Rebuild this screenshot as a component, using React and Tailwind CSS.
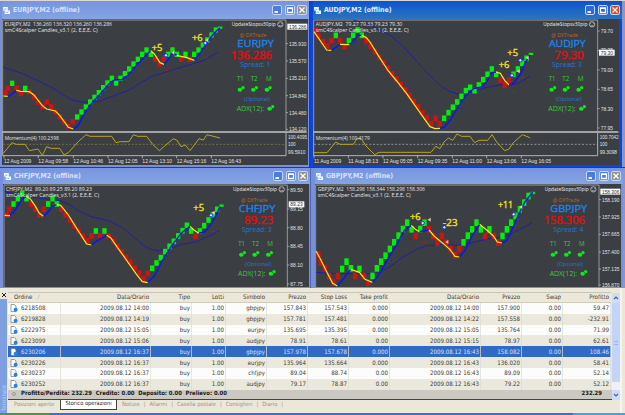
import clsx from "clsx";

// Chart coordinates are in thirds of a pixel.
const CHARTS = [
  {
    id: "eur",
    symbol: "EURJPY",
    ohlc: "136.260 136.320 136.260 136.286",
    ohlcWidth: 322,
    price: "136.286",
    spread: 1,
    view: "6 57 918 438",
    height: 146,
    left: 10,
    axis: 858,
    candleHeight: 16,
    start: 10,
    candles:
      "R278 R265 G250 R265 R280 G265 R275 R290 R306 R320 R306 R320 R336 R351 R365 R378 R365 G351 G336 G321 G306 G292 G278 G263 G249 G235 G249 G235 G221 G207 G192 G178 G163 G150 G163 R178 R192 R178 G163 G150 G163 R178 G163 R178 G163 G150 G135 G120 G105 G90 G83",
    slow: "10,202 60,218 120,245 165,268 190,285 220,301 250,307 295,304 345,286 385,271 420,250 450,231 480,222 500,215 550,200 610,182 655,156",
    falling: [
      "10,288 23,289",
      "49,271 62,274 88,275 101,284 127,317 140,327 166,333 179,346 205,382 220,387",
      "452,152 463,162 480,188 492,193",
      "530,166 560,173 583,181",
    ],
    rising: [
      "23,289 35,283 49,271",
      "220,387 234,378 260,330 280,304 300,283 330,248 345,239 365,239 385,225 410,195 452,152",
      "492,193 505,178 518,158 530,166",
      "583,181 600,160 620,129 640,102 660,83",
    ],
    momentum:
      "10,460 36,428 49,433 75,433 88,452 114,447 127,466 140,440 153,445 179,445 192,465 205,458 235,425 258,404 270,409 335,409 348,428 361,425 387,425 400,404 413,409 440,409 458,433 478,452 492,440 520,416 530,420 543,440 556,435 570,452 583,435 597,416 610,420 621,404 660,414",
    momentumValue: "100.2398",
    prices: [["135.930", 131], ["135.570", 183], ["135.210", 235], ["134.840", 287], ["134.480", 338], ["134.120", 388]],
    current: 80,
    levels: ["100.4095", "99.5910"],
    times: [["12 Aug 2009", 12], ["12 Aug 09:58", 115], ["12 Aug 10:46", 220], ["12 Aug 12:05", 324], ["12 Aug 13:10", 427], ["12 Aug 15:16", 530], ["12 Aug 16:43", 634]],
    notes: [["+5", 455, 153], ["+6", 576, 122]],
    markers: [[498, 166], [616, 129]],
    arrows: [[520, 158], [622, 121]],
    dashes: [[500, 211], [617, 172]],
  },
  {
    id: "aud",
    symbol: "AUDJPY",
    ohlc: "79.27 79.33 79.23 79.30",
    ohlcWidth: 260,
    price: "79.30",
    spread: 3,
    active: true,
    view: "9 57 918 438",
    height: 146,
    left: 13,
    axis: 863,
    candleHeight: 17,
    start: 12,
    candles:
      "R90 R108 R125 R138 R122 G106 R122 R140 G122 G106 G90 G106 R122 R138 R155 R172 R188 R205 R221 R237 R254 R270 R287 R304 R321 R338 R354 R371 R355 R371 G355 G338 G322 G306 G289 G272 G262 G272 G255 G239 G223 G207 G223 R240 R255 R240 G223 G207 G190 G175 G162",
    slow: "130,60 180,74 210,89 245,109 280,140 320,184 360,227 395,260 425,277 450,283 490,275 530,262 570,255 610,254 632,246 660,228",
    falling: ["12,95 50,150 64,151", "90,133 118,134", "155,106 168,112 180,126 205,167 235,213 260,243 290,281 330,338 360,380 375,386 390,385", "558,216 571,220 584,241 597,255"],
    rising: ["64,151 77,142 90,133", "118,134 130,123 143,106 155,106", "390,385 402,382 420,362 440,328 465,290 490,266 517,260 532,242 545,219 558,216", "597,255 610,250 630,225 648,184 660,165"],
    momentum:
      "12,458 51,458 77,426 90,433 130,433 142,414 155,418 168,438 194,464 207,457 363,457 377,439 390,446 402,426 415,414 428,421 441,402 455,409 480,409 494,428 507,421 533,421 546,404 560,426 584,452 597,447 610,428 637,404 660,413",
    momentumValue: "100.4179",
    prices: [["79.70", 93], ["79.35", 151], ["79.00", 210], ["78.65", 268], ["78.30", 326], ["77.95", 384]],
    current: 158,
    levels: ["100.7042", "99.3098"],
    times: [["11 Aug 2009", 12], ["11 Aug 18:13", 115], ["12 Aug 05:05", 219], ["12 Aug 09:35", 323], ["12 Aug 11:00", 427], ["12 Aug 13:06", 530], ["12 Aug 16:05", 634]],
    notes: [["+6", 566, 204], ["+5", 592, 168]],
    markers: [[606, 226], [631, 181]],
    arrows: [[626, 214], [653, 173]],
    dashes: [[637, 233], [608, 274]],
  },
  {
    id: "chf",
    symbol: "CHFJPY",
    ohlc: "89.20 89.25 89.20 89.23",
    ohlcWidth: 258,
    price: "89.23",
    spread: 3,
    view: "9 57 918 309",
    height: 103,
    left: 14,
    axis: 862,
    candleHeight: 17,
    start: 14,
    candles:
      "R150 R133 G117 G101 G85 G101 R117 R133 R150 R133 G117 G101 G117 R133 R150 R165 R182 R198 R213 R228 R213 G198 R213 G198 R213 R228 R245 R260 R277 R292 R309 R325 R341 R325 G310 G294 G278 G260 G244 G229 G213 G197 G181 G198 R214 G198 G182 G165 G149 G133 G122",
    slow: "14,80 70,92 130,101 180,107 210,120 235,137 270,154 325,167 365,186 400,215 430,241 450,252 475,257 510,251 545,238 590,230 625,214 660,196",
    falling: ["14,151 30,152", "79,94 92,103 105,122 118,145 130,154", "170,119 182,121 205,150 230,190 260,237 274,240", "320,211 332,218 350,244 380,286 410,329 427,350 443,353", "570,184 582,195 596,205"],
    rising: ["30,152 45,136 66,102 79,94", "130,154 145,140 157,124 170,119", "274,240 290,228 320,211", "443,353 465,330 485,290 515,242 545,203 570,184", "596,205 613,201 630,182 648,151 660,125"],
    prices: [["89.50", 74], ["89.15", 132], ["88.80", 188], ["88.45", 244], ["88.10", 300], ["87.75", 357]],
    current: 118,
    notes: [["+5", 580, 139]],
    markers: [[633, 151]],
    arrows: [[641, 143]],
    dashes: [[637, 199]],
  },
  {
    id: "gbp",
    symbol: "GBPJPY",
    ohlc: "158.298 158.344 158.298 158.306",
    ohlcWidth: 322,
    price: "158.306",
    spread: 4,
    view: "15 57 918 309",
    height: 103,
    left: 19,
    axis: 867,
    candleHeight: 20,
    start: 18,
    candles:
      "R270 R293 R309 R333 R353 R333 G312 G290 G310 R333 G312 R333 R353 G333 G310 G290 G272 G252 G232 G212 G192 G173 G193 R213 G192 G173 R193 R213 R233 R213 R233 R252 R270 R252 G232 G212 G193 G173 G193 R213 G193 R213 R233 G213 G193 G173 G153 G133 G113 G93 G84",
    slow: "18,322 90,326 200,325 240,305 280,275 320,253 350,242 400,238 440,241 475,236 510,227 545,220 590,214 625,196 666,173",
    falling: ["18,258 30,280 50,320 68,355 82,363", "122,313 148,322 165,343 187,352", "304,181 315,192 328,200", "357,195 372,213 400,236 420,254 435,274 448,276", "509,178 530,195 550,213 562,231 576,234"],
    rising: ["82,363 100,342 122,313", "187,352 205,333 235,280 262,235 283,196 304,181", "328,200 342,197 357,195", "448,276 465,257 485,215 509,178", "576,234 590,227 608,190 625,150 645,110 668,82"],
    prices: [["158.190", 104], ["157.925", 156], ["157.665", 208], ["157.400", 261], ["157.135", 312], ["156.870", 360]],
    current: 80,
    notes: [["+6", 300, 166], ["-23", 398, 184], ["+11", 564, 130]],
    markers: [[338, 174], [403, 187], [611, 148]],
    arrows: [[359, 164], [412, 231], [634, 126]],
    dashes: [[343, 233], [616, 205]],
  },
];

const COLUMNS = ["Ordine", "Data/Orario", "Tipo", "Lotti", "Simbolo", "Prezzo", "Stop Loss", "Take profit", "Data/Orario", "Prezzo", "Swap", "Profitto"];

const ORDERS = [
  ["6218508", "2009.08.12 14:00", "buy", "1.00", "gbpjpy", "157.843", "157.543", "0.000", "2009.08.12 14:00", "157.900", "0.00", "59.47"],
  ["6219828", "2009.08.12 14:19", "buy", "1.00", "gbpjpy", "157.781", "157.481", "0.000", "2009.08.12 14:22", "157.558", "0.00", "-232.91"],
  ["6222975", "2009.08.12 15:05", "buy", "1.00", "eurjpy", "135.695", "135.395", "0.000", "2009.08.12 15:05", "135.764", "0.00", "71.99"],
  ["6223099", "2009.08.12 15:06", "buy", "1.00", "audjpy", "78.91", "78.61", "0.00", "2009.08.12 15:15", "78.97", "0.00", "62.61"],
  ["6230206", "2009.08.12 16:37", "buy", "1.00", "gbpjpy", "157.978", "157.678", "0.000", "2009.08.12 16:43", "158.082", "0.00", "108.46"],
  ["6230226", "2009.08.12 16:37", "buy", "1.00", "eurjpy", "135.964", "135.664", "0.000", "2009.08.12 16:43", "136.020", "0.00", "58.41"],
  ["6230237", "2009.08.12 16:37", "buy", "1.00", "chfjpy", "89.04", "88.74", "0.00", "2009.08.12 16:43", "89.09", "0.00", "52.14"],
  ["6230252", "2009.08.12 16:37", "buy", "1.00", "audjpy", "79.17", "78.87", "0.00", "2009.08.12 16:43", "79.22", "0.00", "52.12"],
];

const SELECTED = "6230206";
const TABS = ["Notizie", "Allarmi", "Casella postale", "Consiglieri", "Diario"];
const GRID = "grid grid-cols-[53px_90px_41px_34px_41px_41px_41px_41px_91px_41px_41px_48px]";
const NARROW = "'Liberation Sans Narrow', 'Liberation Sans', sans-serif";

function Label({ x, y, w, children, ...rest }) {
  return (
    <text x={x} y={y} textLength={w} lengthAdjust="spacingAndGlyphs" {...rest}>
      {children}
    </text>
  );
}

function Signal({ x, y }) {
  return (
    <g fill="#08ee16">
      <ellipse cx={x - 3} cy={y + 2} rx="7" ry="6" />
      <circle cx={x + 6} cy={y - 4} r="5" />
      <path d={`M${x} ${y - 4}l4 5`} stroke="#266b2c" strokeWidth="2" />
    </g>
  );
}

function InfoPanel({ chart }) {
  const { axis, symbol, price, spread } = chart;
  const cx = axis - 92;
  const priceWidth = price.length > 5 ? 124 : 88;
  return (
    <g fontFamily="'Open Sans', sans-serif">
      <Label x={axis - 163} y={79} w={132} fontSize="16" fill="#f0f0f0">UpdateStopsv30pip</Label>
      <circle cx={axis - 17} cy={73} r="8" fill="none" stroke="#e4e4e4" strokeWidth="2" />
      <path d={`M${axis - 21} 70v2M${axis - 13} 70v2M${axis - 21} 76q4 3 8 0`} stroke="#e4e4e4" strokeWidth="1.6" fill="none" />
      <Label x={cx - 47} y={110} w={80} fontSize="15" fill="#b8692c">@ DXTrade</Label>
      <Label x={cx - 54} y={141} w={110} fontSize="28" fill="#1d86ee" stroke="#1d86ee" strokeWidth="0.8">{symbol}</Label>
      <Label x={cx + 50 - priceWidth} y={177} w={priceWidth} fontSize="33" fill="#d81414" stroke="#d81414" strokeWidth="1.5">{price}</Label>
      <Label x={cx - 45} y={202} w={90} fontSize="20" fill="#2478cc">Spread: {spread}</Label>
      <g fontSize="21" fill="#3cc83c">
        <Label x={cx - 55} y={243} w={20}>T1</Label>
        <Label x={cx - 14} y={243} w={21}>T2</Label>
        <Label x={cx + 32} y={243} w={17}>M</Label>
        <Label x={cx - 56} y={332} w={82}>ADX(12):</Label>
      </g>
      <Label x={cx - 34} y={303} w={78} fontSize="16" fill="#2478cc">(Optional)</Label>
      <Signal x={cx - 43} y={267} />
      <Signal x={cx - 3} y={267} />
      <Signal x={cx + 38} y={267} />
      <Signal x={cx + 46} y={324} />
    </g>
  );
}

function Chart({ chart }) {
  const { left, axis, candleHeight, start } = chart;
  const bottom = chart.momentum ? 394 : 366;
  return (
    <svg className="block w-[306px] shrink-0" height={chart.height} viewBox={chart.view} fontFamily={NARROW}>
      <rect x="0" y="57" width="940" height="438" fill="#3b3e43" />
      <path d={`M${left - 2} ${bottom}V60H${axis}V${bottom}`} fill="none" stroke="#a9a9a5" strokeWidth="2.5" />

      <polyline points={chart.slow} fill="none" stroke="#1d1da8" strokeWidth="2.6" />
      {chart.candles.split(" ").map((c, i) => {
        const h = i === 50 ? 7 : candleHeight;
        return (
          <rect
            key={i}
            x={Math.max(start + i * 13 - 6, left)}
            y={Number(c.slice(1)) - h / 2}
            width="13"
            height={h}
            fill={c[0] === "G" ? "#04ee0c" : "#cf1212"}
          />
        );
      })}
      {chart.rising.map((p) => (
        <polyline key={p} points={p} fill="none" stroke="#0a18f0" strokeWidth="4.5" />
      ))}
      {chart.falling.map((p) => (
        <polyline key={p} points={p} fill="none" stroke="#f8e820" strokeWidth="3.6" />
      ))}
      {chart.dashes.map(([x, y]) => (
        <path key={x} d={`M${x - 6} ${y}h12`} stroke="#c01818" strokeWidth="2.5" />
      ))}
      {chart.markers.map(([x, y]) => (
        <circle key={x} cx={x} cy={y} r="5" fill="#dfe6ff" stroke="#1634e8" strokeWidth="3" />
      ))}
      {chart.arrows.map(([x, y]) => (
        <path key={x} d={`M${x - 6} ${y}l9 -6v12z`} fill="#f2c6a0" />
      ))}
      {chart.notes.map(([t, x, y]) => (
        <Label key={t} x={x} y={y} w={t.length > 2 ? 45 : 32} fontSize="27" fontFamily="'Open Sans', sans-serif" fill="#f7e01c" stroke="#f7e01c">
          {t}
        </Label>
      ))}

      <g fill="#e6e6e6" fontSize="16" fontFamily="'Open Sans', sans-serif">
        <Label x={left + 4} y={78} w={chart.ohlcWidth}>{chart.symbol},M2&nbsp; {chart.ohlc}</Label>
        <Label x={left + 4} y={95} w={279}>smC4Scalper Candles_v3.1 (2, E,E,E, C)</Label>
      </g>
      <InfoPanel chart={chart} />

      <g fill="#e2e2e2" fontSize="17">
        {chart.prices.map(([t, y]) => (
          <g key={t}>
            <path d={`M${axis} ${y}h6`} stroke="#c9c9c9" strokeWidth="2" />
            <Label x={axis + 9} y={y + 6} w={t.length > 5 ? 52 : 37}>{t}</Label>
          </g>
        ))}
      </g>
      <rect x={axis + 4} y={chart.current - 9} width={chart.price.length > 5 ? 60 : 47} height="18" fill="#fafafa" />
      <Label x={axis + 9} y={chart.current + 6} w={chart.price.length > 5 ? 52 : 37} fontSize="17" fill="#333">{chart.price}</Label>

      {chart.momentum && (
        <g>
          <path d={`M6 396H${axis + 62}`} stroke="#c6c6c2" strokeWidth="4" />
          <path d={`M${left - 2} 398V467H${axis}V398`} fill="none" stroke="#d2c8c8" strokeWidth="2.5" />
          <path d={`M${left} 433H${axis}`} stroke={chart.active ? "#b9b9b0" : "#8c8648"} strokeWidth="2" strokeDasharray="6 5" />
          <polyline points={chart.momentum} fill="none" stroke="#b9a41e" strokeWidth="3" />
          <g fill="#e2e2e2" fontSize="16.5">
            <Label x={left + 4} y={420} w={162} fontFamily="'Open Sans', sans-serif">Momentum(4) {chart.momentumValue}</Label>
            <Label x={axis + 6} y={416} w={57}>{chart.levels[0]}</Label>
            <Label x={axis + 6} y={439} w={23}>100</Label>
            <Label x={axis + 6} y={463} w={52}>{chart.levels[1]}</Label>
            {chart.times.map(([t, x], i) => (
              <g key={t}>
                <path d={`M${x} 467v8`} stroke="#d8d8d8" strokeWidth="2" />
                <Label x={x} y={488} w={i === 0 ? 82 : 89}>{t}</Label>
              </g>
            ))}
          </g>
        </g>
      )}
    </svg>
  );
}

function WindowButton({ kind, active }) {
  const close = kind === "close";
  return (
    <span
      className={clsx(
        "flex size-[10px] items-center justify-center rounded-[2px] border border-[#c8d6f4]",
        close ? (active ? "bg-[#dc4a24]" : "bg-[#93938c]") : active ? "bg-[#2f68dc]" : "bg-[#4a7de0]"
      )}
    >
      <svg viewBox="0 0 8 8" className="size-2 shrink-0" fill="none" stroke="#fff" strokeWidth="1.3">
        {kind === "min" && <path d="M1.5 6H5" strokeWidth="1.8" />}
        {kind === "max" && <path d="M1.5 2h5v4.5h-5zM1.5 2.3h5" />}
        {close && <path d="M1.5 1.5l5 5M6.5 1.5l-5 5" />}
      </svg>
    </span>
  );
}

function ChartWindow({ chart, className, titleClass }) {
  return (
    <section className={clsx("flex flex-col overflow-hidden", chart.active ? "bg-[#0c45dc]" : "bg-[#7890dc]", className)}>
      <header
        className={clsx(
          "flex shrink-0 items-center pr-[2px] pl-[1px]",
          chart.active ? "bg-linear-to-b from-[#0e50d2] via-[#1c66c6] to-[#2c72bc]" : "bg-linear-to-b from-[#7894e0] to-[#84a4e2]",
          titleClass
        )}
      >
        <svg viewBox="0 0 8 8" className="size-[7px] shrink-0">
          <path d="M0 0h5.500v4H0zM2 4h6v4H2z" fill="#f4f8ff" />
          <path d="M1 3l1-1 1 1 1-1M3 6.500l1-1 1 1 1-1" stroke="#3c84c8" strokeWidth=".7" fill="none" />
        </svg>
        <h2 className={clsx("ml-[3px] text-[6.9px] leading-none font-bold whitespace-nowrap", chart.active ? "text-[#e4edfa]" : "text-[#d8e2f6]")}>
          {chart.symbol},M2 (offline)
        </h2>
        <div className="ml-auto flex gap-[2.5px]">
          <WindowButton kind="min" active={chart.active} />
          <WindowButton kind="max" active={chart.active} />
          <WindowButton kind="close" active={chart.active} />
        </div>
      </header>
      <Chart chart={chart} />
    </section>
  );
}

function OrderIcon() {
  return (
    <svg viewBox="0 0 8 8" className="mr-[3px] size-[8px] shrink-0">
      <path d="M1 .5h3.500L6 2v5.500H1z" fill="#fff" stroke="#777" strokeWidth=".7" />
      <circle cx="5.600" cy="5.700" r="2" fill="#2184e0" />
    </svg>
  );
}

function Terminal() {
  return (
    <section className="flex h-[125px] shrink-0 bg-[#ebe8da] text-[6.1px] leading-none text-[#3c3c38]">
      <aside className="flex w-[7px] shrink-0 flex-col bg-[#7e9fe0]">
        <div className="flex h-[11px] items-end justify-center bg-[#ebe8da] pb-[2px]">
          <svg viewBox="0 0 4 4" className="size-[4px]"><path d="M0 0l4 4M4 0l-4 4" stroke="#222" /></svg>
        </div>
        <span className="mt-auto mb-[2px] rotate-180 self-center text-[6px] leading-[7px] text-[#bccdf0] [writing-mode:vertical-rl]">Terminale</span>
      </aside>
      <div className="flex w-[605px] shrink-0 flex-col pt-[4px]">
        <div className="ml-px w-[603px] border-t border-[#c9c6b8]">
          <div className={clsx(GRID, "h-[10px] border-b border-[#cfccbd]")}>
            {COLUMNS.map((c, i) => (
              <div key={i} className={clsx("flex items-center whitespace-nowrap", i === 0 ? "pl-[6px]" : "justify-end pr-[2px]")}>
                {c}
                {i === 0 && <span className="ml-[6px] text-[#aaa79a]">⁄</span>}
              </div>
            ))}
          </div>
          {ORDERS.map((row, r) => (
            <div
              key={row[0]}
              className={clsx(GRID, "h-[10.83px]", row[0] === SELECTED ? "bg-[#316ac5] text-[#d4e2f8]" : r % 2 ? "bg-[#ebe9dd]" : "bg-[#fcfdfa]")}
            >
              {row.map((cell, i) => (
                <div key={i} className={clsx("flex items-center border-r border-[#dedbd0]/70 whitespace-nowrap", i === 0 ? "pl-[2px]" : "justify-end pr-[1px]")}>
                  {i === 0 && <OrderIcon />}
                  {cell}
                </div>
              ))}
            </div>
          ))}
        </div>
        <div className="ml-px flex h-[10px] items-center border-b border-[#444] bg-[#cbc9c1] pr-[10px] pl-[4px] text-[5.9px] font-bold text-[#191919]">
          <span className="mr-[5px] size-[4px] rounded-full border border-[#999]" />
          <span className="whitespace-pre">Profitto/Perdita: 232.29  Credito: 0.00  Deposito: 0.00  Prelievo: 0.00</span>
          <span className="ml-auto">232.29</span>
        </div>
        <nav className="flex h-[11px] items-center text-[5.7px] whitespace-nowrap text-[#96938a]">
          <span className="w-[53px] pl-[7px]">Posizioni aperte</span>
          <span className="mr-[5px] flex h-[10px] w-[57px] items-center justify-center self-start border-r border-b border-l border-[#444] bg-white text-[#222]">Storico operazioni</span>
          {TABS.map((t) => (
            <span key={t} className="flex gap-[4px] pr-[4px]">
              {t}
              <i className="not-italic">|</i>
            </span>
          ))}
        </nav>
      </div>
      <div className="mt-[5px] flex h-[107px] w-[8px] shrink-0 flex-col bg-[#eef0f4]">
        <svg viewBox="0 0 8 10" className="h-[10px] bg-[#cfdcf8]"><path d="M2 6l2-2 2 2" stroke="#4a64a4" strokeWidth="1.2" fill="none" /></svg>
        <div className="flex h-[79px] items-center justify-center rounded-[1px] bg-[#c4d3f8]">
          <span className="h-[4px] w-[4px] border-y border-[#9db4e8]" />
        </div>
        <svg viewBox="0 0 8 10" className="mt-auto h-[10px] bg-[#cfdcf8]"><path d="M2 4l2 2 2-2" stroke="#4a64a4" strokeWidth="1.2" fill="none" /></svg>
      </div>
      <div className="w-[2px] bg-[#f6f5ee]" />
      <div className="grow bg-[#ebe8da]" />
    </section>
  );
}

export default function App() {
  const [eur, aud, chf, gbp] = CHARTS;
  return (
    <div className="flex h-[415px] w-[625px] flex-col overflow-hidden bg-[#8a96c8] font-['DejaVu_Sans_Condensed','DejaVu_Sans',sans-serif]">
      <div className="h-px shrink-0 bg-[#dcdad0]" />
      <div className="flex h-[166px] shrink-0">
        <ChartWindow chart={eur} className="w-[310px] border-r border-[#1438c4] pl-[2px]" titleClass="h-[18px]" />
        <ChartWindow chart={aud} className="w-[312px] pl-[3px]" titleClass="h-[18px]" />
      </div>
      <div className="flex h-[121px] shrink-0 border-t border-[#2038b0]">
        <ChartWindow chart={chf} className="w-[311px] border-r border-[#5066b8] pl-[3px]" titleClass="h-[16px]" />
        <ChartWindow chart={gbp} className="w-[312px] pl-[4px]" titleClass="h-[16px]" />
      </div>
      <Terminal />
      <footer className="flex grow bg-[#2f74dc]">
        <div className="w-[50px] bg-[#4c9450]" />
        <div className="ml-auto w-[52px] bg-[#38a8ec]" />
      </footer>
    </div>
  );
}
